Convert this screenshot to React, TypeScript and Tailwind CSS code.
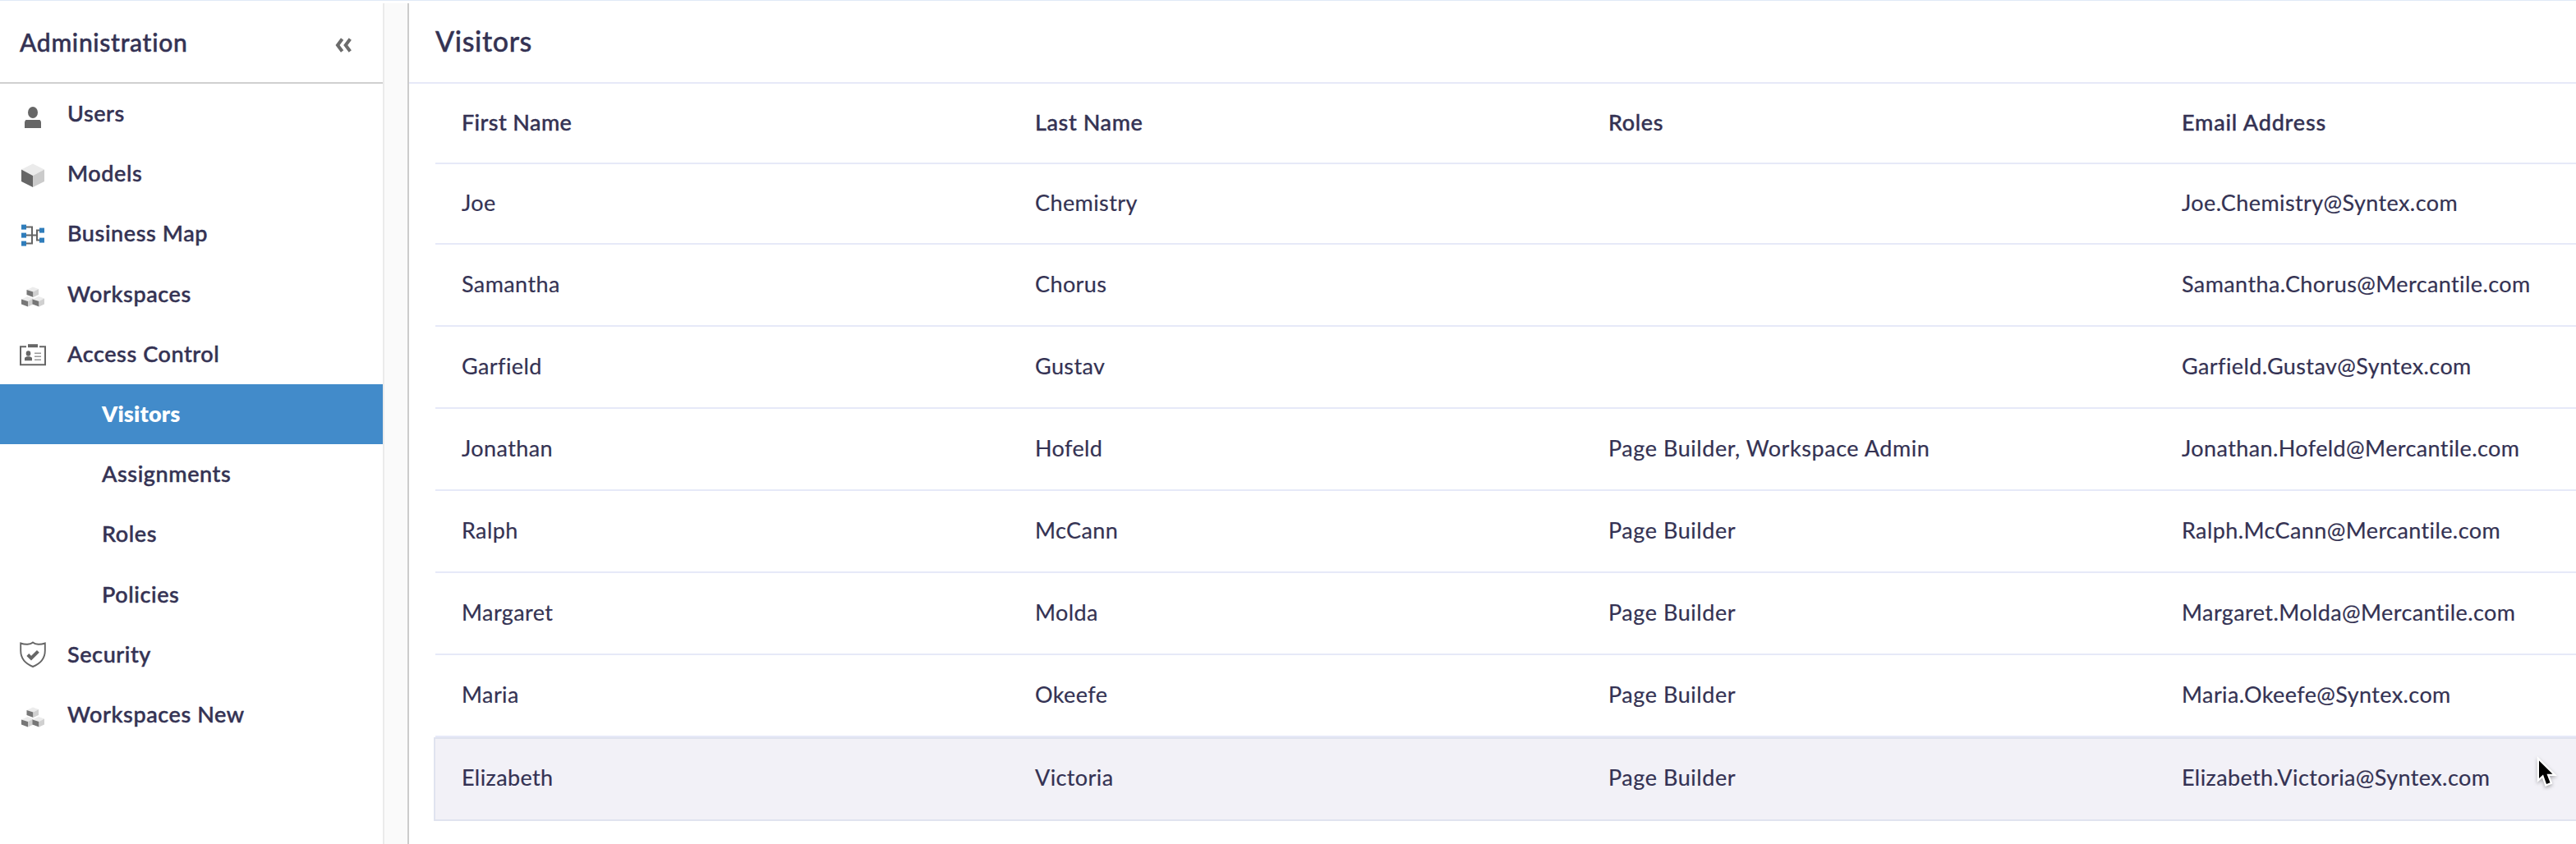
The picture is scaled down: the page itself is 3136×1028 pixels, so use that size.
import React from "react";

type NavItem = {
  label: string;
  icon?: React.ReactNode;
  child?: boolean;
  active?: boolean;
};

type Visitor = {
  firstName: string;
  lastName: string;
  roles: string;
  email: string;
};

function UserIcon() {
  return (
    <svg width="32" height="36" viewBox="0 0 32 36" fill="#666">
      <ellipse cx="16" cy="15" rx="6" ry="7" />
      <path d="M7.5 24h17q1.5 1.5 1.5 3v7h-20v-7q0-1.5 1.5-3z" />
    </svg>
  );
}

function CubeIcon() {
  return (
    <svg width="32" height="36" viewBox="0 0 32 36">
      <path d="M16 4.5l14 7-14 7.5-14-7.5z" fill="#ebebeb" />
      <path d="M2 11.5l14 7.5v14l-14-7z" fill="#666" />
      <path d="M30 11.5l-14 7.5v14l14-7z" fill="#cbcbcb" />
    </svg>
  );
}

function MapIcon() {
  return (
    <svg width="32" height="36" viewBox="0 0 32 36">
      <path
        d="M7 8.6h8v20h-8M7 18.6h14M26 12.6h-5v12h5"
        fill="none"
        stroke="#666"
        strokeWidth="2"
      />
      <g fill="#2f7dbb">
        <rect x="2" y="5.6" width="6" height="6" />
        <rect x="2" y="15.6" width="6" height="6" />
        <rect x="2" y="25.6" width="6" height="6" />
        <rect x="24" y="9.6" width="6" height="6" />
        <rect x="24" y="21.6" width="6" height="6" />
      </g>
    </svg>
  );
}

function SmallCube({ x, y }: { x: number; y: number }) {
  return (
    <g transform={`translate(${x} ${y})`}>
      <path d="M7.5 0l7 2.5-6.5 3.5-8-2.5z" fill="#ececec" />
      <path d="M0 3.5l8 2.5v6.5l-8-3z" fill="#777" />
      <path d="M14.5 2.5l-6.5 3.5v6.5l6.5-3z" fill="#d0d0d0" />
    </g>
  );
}

function WorkspacesIcon() {
  return (
    <svg width="32" height="36" viewBox="0 0 32 36">
      <SmallCube x={8.5} y={8.5} />
      <SmallCube x={2} y={20} />
      <SmallCube x={15.5} y={20} />
    </svg>
  );
}

function BadgeIcon() {
  return (
    <svg width="32" height="36" viewBox="0 0 32 36" fill="#666">
      <path d="M8 8.2h-7v22h30v-22h-7" fill="none" stroke="#666" strokeWidth="2" />
      <rect x="10" y="5.2" width="12" height="4" />
      <ellipse cx="10.5" cy="16.5" rx="2.8" ry="3.3" />
      <path d="M6 25.2v-3.5l2.5-1.5h4l2.5 1.5v3.5z" />
      <path d="M18 16.2h8M18 20.2h8M18 24.2h8" stroke="#999" strokeWidth="1.5" />
    </svg>
  );
}

function ShieldIcon() {
  return (
    <svg width="32" height="36" viewBox="0 0 32 36" fill="none" stroke="#666">
      <path
        d="M16 2.4q-2.5 2.1-6.5 2.3t-8.3-1.2v9q0 13.5 14.8 19.5q14.8-6 14.8-19.5v-9q-4.3 1.4-8.3 1.2t-6.5-2.3z"
        strokeWidth="1.9"
      />
      <path d="M9.8 17.5l4.2 4.2 8.4-8.4" strokeWidth="4" />
    </svg>
  );
}

function CollapseIcon() {
  return (
    <svg width="20" height="18" viewBox="0 0 20 18" fill="none" stroke="#6b6b6b" strokeWidth="4">
      <path d="M8.6 1.5l-5.6 7.5 5.6 7.5M18.3 1.5l-5.6 7.5 5.6 7.5" />
    </svg>
  );
}

const navItems: NavItem[] = [
  { label: "Users", icon: <UserIcon /> },
  { label: "Models", icon: <CubeIcon /> },
  { label: "Business Map", icon: <MapIcon /> },
  { label: "Workspaces", icon: <WorkspacesIcon /> },
  { label: "Access Control", icon: <BadgeIcon /> },
  { label: "Visitors", child: true, active: true },
  { label: "Assignments", child: true },
  { label: "Roles", child: true },
  { label: "Policies", child: true },
  { label: "Security", icon: <ShieldIcon /> },
  { label: "Workspaces New", icon: <WorkspacesIcon /> },
];

const visitors: Visitor[] = [
  { firstName: "Joe", lastName: "Chemistry", roles: "", email: "Joe.Chemistry@Syntex.com" },
  { firstName: "Samantha", lastName: "Chorus", roles: "", email: "Samantha.Chorus@Mercantile.com" },
  { firstName: "Garfield", lastName: "Gustav", roles: "", email: "Garfield.Gustav@Syntex.com" },
  {
    firstName: "Jonathan",
    lastName: "Hofeld",
    roles: "Page Builder, Workspace Admin",
    email: "Jonathan.Hofeld@Mercantile.com",
  },
  { firstName: "Ralph", lastName: "McCann", roles: "Page Builder", email: "Ralph.McCann@Mercantile.com" },
  { firstName: "Margaret", lastName: "Molda", roles: "Page Builder", email: "Margaret.Molda@Mercantile.com" },
  { firstName: "Maria", lastName: "Okeefe", roles: "Page Builder", email: "Maria.Okeefe@Syntex.com" },
  { firstName: "Elizabeth", lastName: "Victoria", roles: "Page Builder", email: "Elizabeth.Victoria@Syntex.com" },
];

function Sidebar() {
  return (
    <aside className="w-[468px] shrink-0 border-r-2 border-[#ebebeb]">
      <div className="flex h-[98px] items-center justify-between border-b-2 border-[#d0d0d0] pl-6 pr-[38px]">
        <h2 className="pb-0.5 text-[30px] font-medium tracking-[0.7px] [-webkit-text-stroke:0.5px]">Administration</h2>
        <span className="pt-1.5">
          <CollapseIcon />
        </span>
      </div>
      <nav>
        {navItems.map((item) => (
          <div
            key={item.label}
            className={
              item.active
                ? "flex h-[73.2px] items-center bg-[#428bca] pl-[124px] font-extrabold text-white"
                : item.child
                  ? "flex h-[73.2px] items-center pl-[124px] font-medium [-webkit-text-stroke:0.5px]"
                  : "flex h-[73.2px] items-center pl-6 font-medium [-webkit-text-stroke:0.5px]"
            }
          >
            {item.icon && <span className="mr-[26px] pt-0.5">{item.icon}</span>}
            <span className={item.active ? "pb-0.5 tracking-[0.2px]" : "pb-0.5 tracking-[0.6px]"}>{item.label}</span>
          </div>
        ))}
      </nav>
    </aside>
  );
}

function VisitorTable() {
  return (
    <div className="pl-8">
      <div className="grid h-[98px] grid-cols-[698px_698px_698px_1fr] items-center border-b-2 border-[#e6e9f8] pb-[3px] pl-8 font-medium tracking-[0.6px] [-webkit-text-stroke:0.4px]">
        <span className="tracking-[0.4px]">First Name</span>
        <span>Last Name</span>
        <span>Roles</span>
        <span className="tracking-[0.8px]">Email Address</span>
      </div>
      {visitors.map((visitor, i) => (
        <div
          key={visitor.email}
          className={
            i === visitors.length - 1
              ? "-ml-0.5 grid h-[102px] grid-cols-[698px_698px_698px_1fr] items-center border-y-2 border-l-2 border-[#e0e3ef] bg-[#f2f1f7] pb-[5px] pl-8 tracking-[0.4px] [-webkit-text-stroke:0.2px]"
              : i === 0
                ? "grid h-[98px] grid-cols-[698px_698px_698px_1fr] items-center border-b-2 border-[#e6e9f8] pb-[3px] pl-8 tracking-[0.4px] [-webkit-text-stroke:0.2px]"
                : "grid h-[100px] grid-cols-[698px_698px_698px_1fr] items-center border-b-2 border-[#e6e9f8] pb-[3px] pl-8 tracking-[0.4px] [-webkit-text-stroke:0.2px]"
          }
        >
          <span>{visitor.firstName}</span>
          <span>{visitor.lastName}</span>
          <span className="tracking-[0.55px]">{visitor.roles}</span>
          <span>{visitor.email}</span>
        </div>
      ))}
    </div>
  );
}

function Cursor() {
  return (
    <svg
      className="absolute left-[3086px] top-[920px] drop-shadow-[0_2px_2px_rgba(0,0,0,0.3)]"
      width="32"
      height="44"
      viewBox="0 0 32 44"
    >
      <path
        d="M5 5.5v21.5l5-4.5 4 11.5 4.5-1.7-4-10.5h7z"
        fill="#000"
        stroke="#fff"
        strokeWidth="4.5"
        paintOrder="stroke"
      />
    </svg>
  );
}

function App() {
  return (
    <div className="relative flex h-[1028px] w-[3136px] overflow-hidden border-t border-[#e0e9f7] bg-white pt-[3px] font-['Lato',sans-serif] text-[27px] leading-none text-[#343253]">
      <Sidebar />
      <div className="w-7 shrink-0 bg-[#fafafa]" />
      <main className="flex-1 border-l-2 border-[#ccc]">
        <div className="flex h-[98px] items-center border-b-2 border-[#e6e9f8] pb-1 pl-8">
          <h1 className="text-[34px] font-medium tracking-[0.6px] [-webkit-text-stroke:0.4px]">Visitors</h1>
        </div>
        <VisitorTable />
      </main>
      <Cursor />
    </div>
  );
}

export default App;
